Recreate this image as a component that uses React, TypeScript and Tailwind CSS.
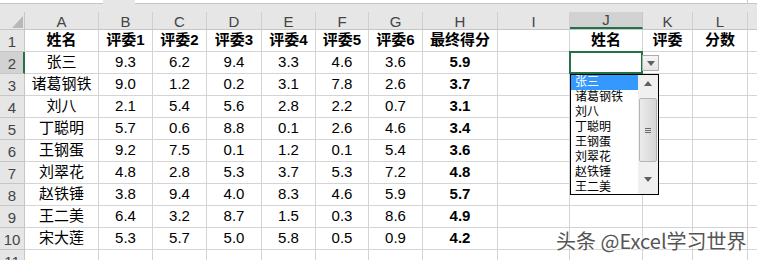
import React from 'react';

const cols = [
  { l: 'A', w: 'w-[74px]' },
  { l: 'B', w: 'w-[54px]' },
  { l: 'C', w: 'w-[54px]' },
  { l: 'D', w: 'w-[55px]' },
  { l: 'E', w: 'w-[54px]' },
  { l: 'F', w: 'w-[53px]' },
  { l: 'G', w: 'w-[54px]' },
  { l: 'H', w: 'w-[75px]' },
  { l: 'I', w: 'w-[72px]' },
  { l: 'J', w: 'w-[73px]' },
  { l: 'K', w: 'w-[50px]' },
  { l: 'L', w: 'w-[55px]' },
];

const scores: [string, string[]][] = [
  ['张三', ['9.3', '6.2', '9.4', '3.3', '4.6', '3.6', '5.9']],
  ['诸葛钢铁', ['9.0', '1.2', '0.2', '3.1', '7.8', '2.6', '3.7']],
  ['刘八', ['2.1', '5.4', '5.6', '2.8', '2.2', '0.7', '3.1']],
  ['丁聪明', ['5.7', '0.6', '8.8', '0.1', '2.6', '4.6', '3.4']],
  ['王钢蛋', ['9.2', '7.5', '0.1', '1.2', '0.1', '5.4', '3.6']],
  ['刘翠花', ['4.8', '2.8', '5.3', '3.7', '5.3', '7.2', '4.8']],
  ['赵铁锤', ['3.8', '9.4', '4.0', '8.3', '4.6', '5.9', '5.7']],
  ['王二美', ['6.4', '3.2', '8.7', '1.5', '0.3', '8.6', '4.9']],
  ['宋大莲', ['5.3', '5.7', '5.0', '5.8', '0.5', '0.9', '4.2']],
];

const header = ['姓名', '评委1', '评委2', '评委3', '评委4', '评委5', '评委6', '最终得分', '', '姓名', '评委', '分数'];

type Cell = { t: string; b?: boolean };

const rows: Cell[][] = [
  header.map((t) => ({ t, b: true })),
  ...scores.map(([name, vals]) => [
    { t: name },
    ...vals.slice(0, 6).map((t) => ({ t })),
    { t: vals[6], b: true },
    { t: '' },
    { t: '' },
    { t: '' },
    { t: '' },
  ]),
  cols.map(() => ({ t: '' })),
];

const names = ['张三', '诸葛钢铁', '刘八', '丁聪明', '王钢蛋', '刘翠花', '赵铁锤', '王二美'];

const Tri = ({ up }: { up?: boolean }) => (
  <svg width="8" height="5" viewBox="0 0 8 5">
    <polygon points={up ? '0,5 8,5 4,0' : '0,0 8,0 4,5'} fill="#5f5f5f" />
  </svg>
);

const DropList = () => (
  <div className="absolute left-0 top-[22px] z-20 flex h-[121px] w-[89px] overflow-hidden border border-black bg-white">
    <div className="flex-1">
      {names.map((n, i) => (
        <div
          key={n}
          className={
            i === 0
              ? 'h-[15px] pl-[4px] text-[12px] leading-[15px] bg-[#3399ff] text-white'
              : 'h-[15px] pl-[4px] text-[12px] leading-[15px] text-black'
          }
        >
          {n}
        </div>
      ))}
    </div>
    <div className="flex w-[20px] flex-col bg-[#f0f0f0]">
      <div className="flex h-[17px] items-center justify-center">
        <Tri up />
      </div>
      <div className="flex-1 px-[1px] pt-[6px]">
        <div className="flex h-[64px] items-center justify-center rounded-[2px] border border-[#b4b4b4] bg-gradient-to-r from-[#ececec] to-[#d6d6d6]">
          <div className="flex flex-col gap-[1px]">
            <div className="h-px w-[6px] bg-[#6a6a6a]" />
            <div className="h-px w-[6px] bg-[#6a6a6a]" />
            <div className="h-px w-[6px] bg-[#6a6a6a]" />
          </div>
        </div>
      </div>
      <div className="flex h-[24px] items-center justify-center pb-[6px]">
        <Tri />
      </div>
    </div>
  </div>
);

export default function App() {
  return (
    <div className="relative h-[260px] w-[757px] overflow-hidden bg-white font-['Liberation_Sans','Noto_Sans_CJK_SC',sans-serif] text-[15px] text-black">
      {/* formula bar edge */}
      <div className="flex h-[4px] bg-[#e6e6e6]">
        <div className="w-[103px] border-b border-[#c6c6c6] bg-white" />
        <div className="w-[32px]" />
        <div className="w-[612px] border-b border-[#c6c6c6] bg-white" />
        <div className="flex-1 border-b border-l border-[#c6c6c6] bg-white" />
      </div>
      <div className="h-[8px] bg-[#e6e6e6]" />

      {/* column headers */}
      <div className="flex h-[18px] border-b border-[#c6c6c6] bg-[#e6e6e6] text-[#444]">
        <div className="relative w-[25px] border-r border-[#c6c6c6]">
          <svg className="absolute left-[12px] top-[4px]" width="11" height="12" viewBox="0 0 11 12">
            <polygon points="0,12 11,12 11,0" fill="#b9b9b9" />
          </svg>
        </div>
        {cols.map((c) => (
          <div
            key={c.l}
            className={
              c.l === 'J'
                ? `${c.w} flex items-center justify-center border-r border-b-2 border-r-[#c6c6c6] border-b-[#217346] bg-[#d2d2d2] pt-[2px]`
                : `${c.w} flex items-center justify-center border-r border-[#d0d0d0] pt-[3px]`
            }
          >
            {c.l}
          </div>
        ))}
        <div className="flex-1" />
      </div>

      {/* rows */}
      {rows.map((r, ri) => (
        <div key={ri} className="flex h-[22px]">
          <div
            className={
              ri === 1
                ? 'flex w-[25px] items-center justify-center border-b border-r-2 border-b-[#c6c6c6] border-r-[#217346] bg-[#d2d2d2] pt-[3px] pl-[1px] text-[#444]'
                : 'flex w-[25px] items-center justify-center border-b border-r border-[#c6c6c6] bg-[#e6e6e6] pt-[3px] text-[#444]'
            }
          >
            {ri + 1}
          </div>
          {r.map((cell, ci) => (
            <div
              key={ci}
              className={`${cols[ci].w} relative flex items-center justify-center whitespace-nowrap border-b border-r border-[#d4d4d4] ${cell.b ? 'font-bold' : ''}`}
            >
              {cell.t}
              {ri === 1 && ci === 9 && (
                <>
                  <div className="absolute inset-[-1px] z-10 border-2 border-[#217346]" />
                  <div className="absolute left-full top-[3px] z-20 flex h-[16px] w-[17px] items-center justify-center border border-[#acacac] bg-gradient-to-b from-[#f6f6f6] to-[#e4e4e4]">
                    <Tri />
                  </div>
                  <DropList />
                </>
              )}
            </div>
          ))}
          <div className="flex-1 border-b border-[#d4d4d4]" />
        </div>
      ))}

      {/* watermark */}
      <div className="absolute left-[556px] top-[229px] z-30 whitespace-nowrap font-['Noto_Sans_CJK_SC',sans-serif] text-[20px] leading-[24px] text-[#555] [text-shadow:0_0_2px_#fff,0_0_2px_#fff,0_0_3px_#fff]">
        头条 @Excel学习世界
      </div>
    </div>
  );
}
